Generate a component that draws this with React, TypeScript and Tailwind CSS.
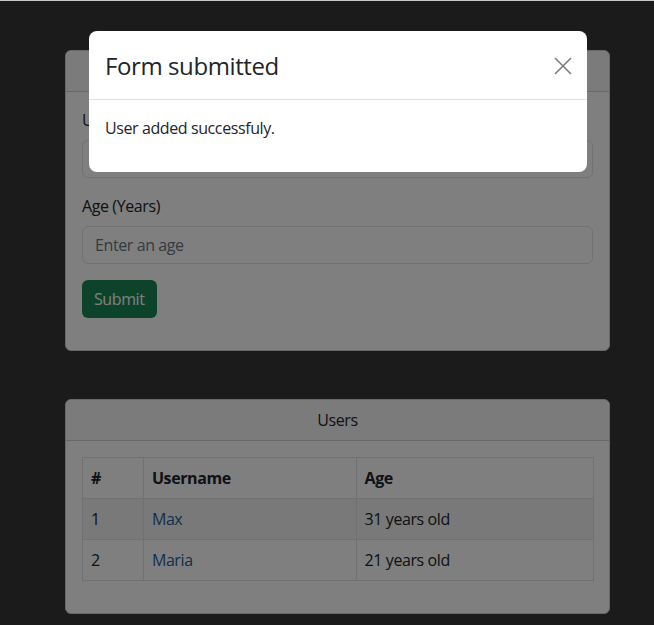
import React from "react";

const font = { fontFamily: '"Open Sans", "Noto Sans", sans-serif' };

export default function App() {
  return (
    <div className="w-[654px] h-[625px] overflow-hidden bg-[#363636] border-t border-[#c8c8c8] relative tracking-[-0.4px]" style={font}>
      <div className="flex flex-col pt-[49px] pl-[65px] text-[16px] leading-[24px] text-[#212529]">
        {/* Form card */}
        <div className="w-[545px] bg-white border border-[#d2d2d2] rounded-[6px] overflow-hidden">
          <div className="h-[41px] border-b border-[#d2d2d2] bg-[#f7f7f7] flex items-center justify-center">Add user</div>
          <div className="p-4 flex flex-col">
            <label className="mb-2">Username</label>
            <div className="h-[38px] border border-[#dee2e6] rounded-[6px] px-3 flex items-center text-[#6c757d]">Enter a username</div>
            <label className="mt-4 mb-2">Age (Years)</label>
            <div className="h-[38px] border border-[#dee2e6] rounded-[6px] px-3 flex items-center text-[#6c757d]">Enter an age</div>
            <div className="mt-4 mb-4">
              <button className="h-[38px] px-3 bg-[#198754] text-white rounded-[6px]">Submit</button>
            </div>
          </div>
        </div>

        {/* Users card */}
        <div className="mt-[48px] w-[545px] bg-white border border-[#d2d2d2] rounded-[6px] overflow-hidden">
          <div className="h-[41px] border-b border-[#d2d2d2] bg-[#f7f7f7] flex items-center justify-center">Users</div>
          <div className="p-4 pb-8">
            <table className="w-[512px] border-collapse border border-[#dee2e6]">
              <colgroup>
                <col className="w-[61px]" />
                <col className="w-[213px]" />
                <col className="w-[238px]" />
              </colgroup>
              <thead>
                <tr className="h-[41px]">
                  <th className="border border-[#dee2e6] px-2 text-left font-bold">#</th>
                  <th className="border border-[#dee2e6] px-2 text-left font-bold">Username</th>
                  <th className="border border-[#dee2e6] px-2 text-left font-bold">Age</th>
                </tr>
              </thead>
              <tbody>
                <tr className="h-[41px] bg-[#f2f2f2]">
                  <td className="border border-[#dee2e6] px-2">1</td>
                  <td className="border border-[#dee2e6] px-2 text-[#2a5d94]">Max</td>
                  <td className="border border-[#dee2e6] px-2">31 years old</td>
                </tr>
                <tr className="h-[41px]">
                  <td className="border border-[#dee2e6] px-2">2</td>
                  <td className="border border-[#dee2e6] px-2 text-[#2a5d94]">Maria</td>
                  <td className="border border-[#dee2e6] px-2">21 years old</td>
                </tr>
              </tbody>
            </table>
          </div>
        </div>
      </div>

      {/* Backdrop */}
      <div className="absolute inset-0 bg-black/50" />

      {/* Modal */}
      <div className="absolute left-[89px] top-[30px] w-[498px] bg-white rounded-[8px] text-[#212529] flex flex-col">
        <div className="h-[69px] px-4 flex items-center justify-between border-b border-[#dee2e6]">
          <div className="text-[24px] leading-[36px] font-medium pt-[2px]">Form submitted</div>
          <svg width="18" height="18" viewBox="0 0 18 18" className="mr-[-1px] mt-[1px]">
            <path d="M1 1 L17 17 M17 1 L1 17" stroke="#7b7b7b" strokeWidth="1.6" fill="none" />
          </svg>
        </div>
        <div className="pt-4 pb-8 px-4 text-[16px] leading-[24px]">User added successfuly.</div>
      </div>
    </div>
  );
}
